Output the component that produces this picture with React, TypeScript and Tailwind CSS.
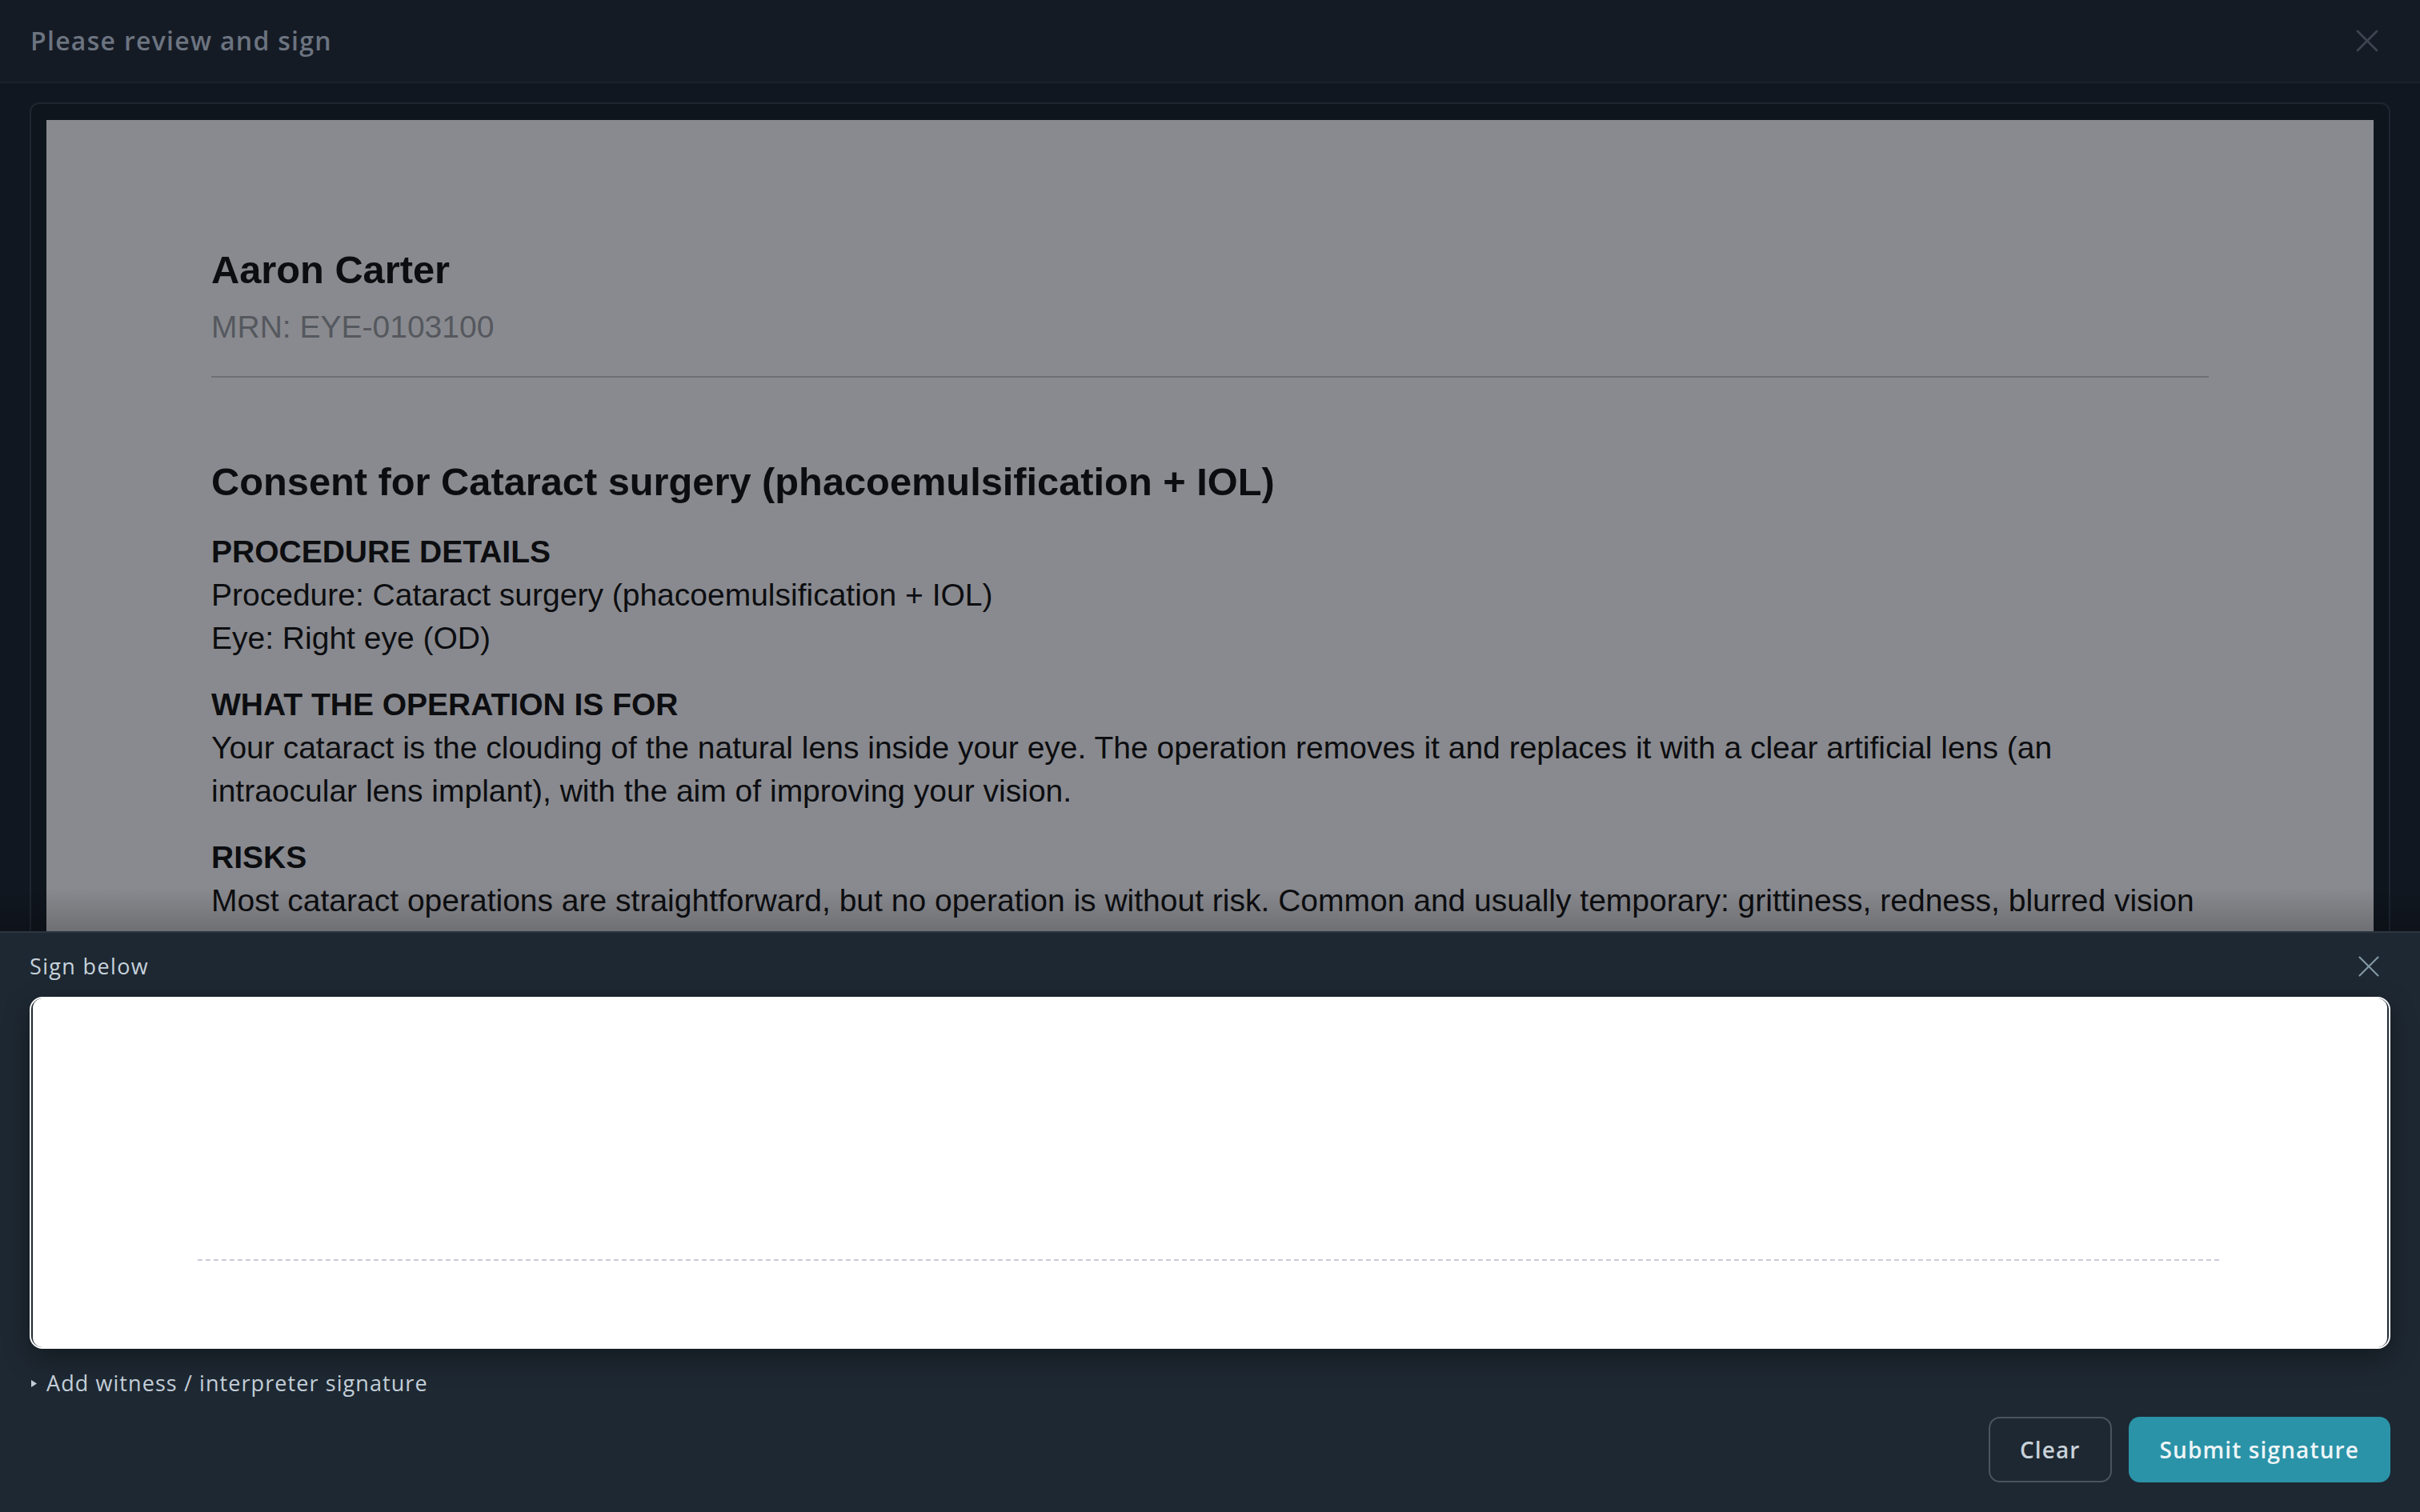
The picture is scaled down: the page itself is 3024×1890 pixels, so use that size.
import React from "react";
import { X } from "lucide-react";

const ui = { fontFamily: '"Open Sans", "Noto Sans", sans-serif' };
const doc = { fontFamily: '"Liberation Sans", Arial, sans-serif' };

export default function App() {
  return (
    <div className="relative h-screen w-full overflow-hidden bg-[#111720]" style={ui}>
      <div className="flex h-screen flex-col">
        {/* Header */}
        <header className="flex h-[104px] shrink-0 items-center justify-between border-b-2 border-[#1b222d] bg-[#151b25] pl-[38px] pr-[42px]">
          <h1 className="text-[32px] font-semibold tracking-[0.04em] text-[#6c7480]">Please review and sign</h1>
          <X size={48} strokeWidth={1.4} className="text-[#3d4551]" />
        </header>

        {/* Document area */}
        <main className="min-h-0 flex-1 px-[37px] pt-[24px]">
          <div className="h-full overflow-hidden rounded-[12px] border-2 border-[#1e2631] bg-[#0f151d] px-[19px] pt-[20px]">
            <div className="h-full bg-[#898a8f] px-[206px] pt-[158px] text-[#0c0d10]" style={doc}>
              <div className="border-b-2 border-[#6d7077] pb-[34px]">
                <div className="text-[48.75px] font-bold leading-[58px]">Aaron Carter</div>
                <div className="mt-[16px] text-[39px] leading-[54px] text-[#55585e]">MRN: EYE-0103100</div>
              </div>
              <div className="pr-[10px]">
                <h2 className="mt-[101px] text-[48.75px] font-bold leading-[58px]">
                  Consent for Cataract surgery (phacoemulsification + IOL)
                </h2>
                <section className="mt-[32px] text-[39px] leading-[54px]">
                  <div className="font-bold">PROCEDURE DETAILS</div>
                  <div>Procedure: Cataract surgery (phacoemulsification + IOL)</div>
                  <div>Eye: Right eye (OD)</div>
                </section>
                <section className="mt-[29px] text-[39px] leading-[54px]">
                  <div className="font-bold">WHAT THE OPERATION IS FOR</div>
                  <p>
                    Your cataract is the clouding of the natural lens inside your eye. The operation removes it and
                    replaces it with a clear artificial lens (an intraocular lens implant), with the aim of improving
                    your vision.
                  </p>
                </section>
                <section className="mt-[29px] text-[39px] leading-[54px]">
                  <div className="font-bold">RISKS</div>
                  <p>
                    Most cataract operations are straightforward, but no operation is without risk. Common and usually
                    temporary: grittiness, redness, blurred vision and raised eye pressure in the first days after
                    surgery. Less common: swelling at the back of the eye, clouding behind the lens implant, or
                    infection.
                  </p>
                </section>
              </div>
            </div>
          </div>
        </main>
      </div>

      {/* Signature sheet */}
      <div className="absolute inset-x-0 bottom-0 h-[726px] border-t-2 border-[#35434e] bg-[#1e2832] px-[37px] pt-[19px] pb-[37px]">
        <div className="pointer-events-none absolute inset-x-0 bottom-full h-[56px] bg-gradient-to-b from-transparent to-[rgba(0,0,0,0.2)]" />
        <div className="flex h-[46px] items-center justify-between">
          <span className="text-[27px] font-medium tracking-[0.05em] text-[#c6d2dc]">Sign below</span>
          <X size={46} strokeWidth={1.1} className="mr-[4px] text-[#8397a4]" />
        </div>

        <div className="mt-[15px] h-[440px] rounded-[16px] border-2 border-white bg-[#1e2832] px-[2px] shadow-[0_12px_32px_rgba(0,0,0,0.35)]">
          <div className="relative h-full rounded-[12px] bg-white">
            <svg className="absolute inset-0 h-full w-full" preserveAspectRatio="none">
              <line x1="7%" x2="93%" y1="75%" y2="75%" stroke="#c9ccd8" strokeWidth="2" strokeDasharray="6 4" />
            </svg>
          </div>
        </div>

        <div className="mt-[25px] flex h-[36px] items-center gap-[11px]">
          <svg width="8" height="9" viewBox="0 0 8 9" className="ml-[2px]">
            <path d="M0 0 L7 4.5 L0 9 Z" fill="#c3ced8" />
          </svg>
          <span className="text-[27px] font-medium tracking-[0.04em] text-[#c3ced8]">
            Add witness / interpreter signature
          </span>
        </div>

        <div className="mt-[24px] flex justify-end gap-[21px]">
          <button className="h-[82px] rounded-[14px] border-2 border-[#4b545d] px-[37px] text-[28px] font-semibold tracking-[0.04em] text-[#c8d2da]">
            Clear
          </button>
          <button className="h-[82px] rounded-[14px] bg-[#2b93a8] px-[39px] text-[28px] font-semibold tracking-[0.04em] text-[#eef5f7]">
            Submit signature
          </button>
        </div>
      </div>
    </div>
  );
}
